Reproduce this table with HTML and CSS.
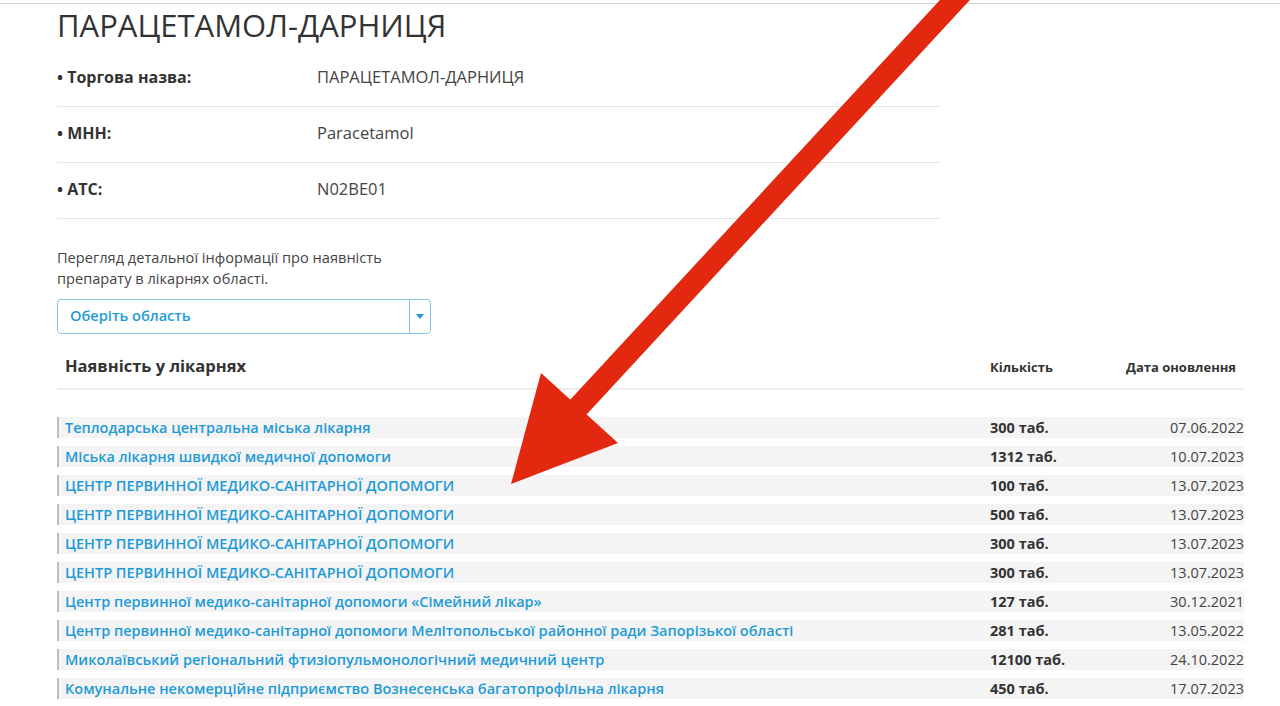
FILE: index.html
```html
<!DOCTYPE html>
<html lang="uk">
<head>
	<meta charset="utf-8">
	<title>ПАРАЦЕТАМОЛ-ДАРНИЦЯ</title>
	<link rel="stylesheet" href="styles.css">
</head>
<body>
	<div class="topLine"></div>
	<div class="page">
		<h1 class="drugTitle">ПАРАЦЕТАМОЛ-ДАРНИЦЯ</h1>

		<div class="infoTable">
			<div class="infoRow">
				<span class="infoLabel">• Торгова назва:</span>
				<span class="infoValue">ПАРАЦЕТАМОЛ-ДАРНИЦЯ</span>
			</div>
			<div class="infoRow">
				<span class="infoLabel">• МНН:</span>
				<span class="infoValue">Paracetamol</span>
			</div>
			<div class="infoRow">
				<span class="infoLabel">• АТС:</span>
				<span class="infoValue">N02BE01</span>
			</div>
		</div>

		<p class="regionHint">Перегляд детальної інформації про наявність препарату в лікарнях області.</p>

		<div class="regionSelect">
			<span class="regionSelectText">Оберіть область</span>
			<span class="regionSelectArrow">
				<svg viewBox="0 0 8 5" width="8" height="5"><polygon points="0 0 8 0 4 5" fill="#1e9bd7"/></svg>
			</span>
		</div>

		<div class="stockHead">
			<span class="colName stockTitle">Наявність у лікарнях</span>
			<span class="colQty">Кількість</span>
			<span class="colDate">Дата оновлення</span>
		</div>

		<div class="stockList">
			<div class="stockRow">
				<a class="colName" href="#">Теплодарська центральна міська лікарня</a>
				<span class="colQty">300 таб.</span>
				<span class="colDate">07.06.2022</span>
			</div>
			<div class="stockRow">
				<a class="colName" href="#">Міська лікарня швидкої медичної допомоги</a>
				<span class="colQty">1312 таб.</span>
				<span class="colDate">10.07.2023</span>
			</div>
			<div class="stockRow">
				<a class="colName" href="#">ЦЕНТР ПЕРВИННОЇ МЕДИКО-САНІТАРНОЇ ДОПОМОГИ</a>
				<span class="colQty">100 таб.</span>
				<span class="colDate">13.07.2023</span>
			</div>
			<div class="stockRow">
				<a class="colName" href="#">ЦЕНТР ПЕРВИННОЇ МЕДИКО-САНІТАРНОЇ ДОПОМОГИ</a>
				<span class="colQty">500 таб.</span>
				<span class="colDate">13.07.2023</span>
			</div>
			<div class="stockRow">
				<a class="colName" href="#">ЦЕНТР ПЕРВИННОЇ МЕДИКО-САНІТАРНОЇ ДОПОМОГИ</a>
				<span class="colQty">300 таб.</span>
				<span class="colDate">13.07.2023</span>
			</div>
			<div class="stockRow">
				<a class="colName" href="#">ЦЕНТР ПЕРВИННОЇ МЕДИКО-САНІТАРНОЇ ДОПОМОГИ</a>
				<span class="colQty">300 таб.</span>
				<span class="colDate">13.07.2023</span>
			</div>
			<div class="stockRow">
				<a class="colName" href="#">Центр первинної медико-санітарної допомоги «Сімейний лікар»</a>
				<span class="colQty">127 таб.</span>
				<span class="colDate">30.12.2021</span>
			</div>
			<div class="stockRow">
				<a class="colName" href="#">Центр первинної медико-санітарної допомоги Мелітопольської районної ради Запорізької області</a>
				<span class="colQty">281 таб.</span>
				<span class="colDate">13.05.2022</span>
			</div>
			<div class="stockRow">
				<a class="colName" href="#">Миколаївський регіональний фтизіопульмонологічний медичний центр</a>
				<span class="colQty">12100 таб.</span>
				<span class="colDate">24.10.2022</span>
			</div>
			<div class="stockRow">
				<a class="colName" href="#">Комунальне некомерційне підприємство Вознесенська багатопрофільна лікарня</a>
				<span class="colQty">450 таб.</span>
				<span class="colDate">17.07.2023</span>
			</div>
		</div>
	</div>

	<!-- red annotation arrow drawn over the page -->
	<svg class="annotation" viewBox="0 0 1280 706" width="1280" height="706">
		<line x1="966" y1="-12" x2="572" y2="414" stroke="#e2280e" stroke-width="22"/>
		<polygon points="511 484 541 373 618 443" fill="#e2280e"/>
	</svg>
</body>
</html>
```

FILE: styles.css
```css
body {
	margin: 0;
	padding: 0;
	overflow: hidden;
	background: #fff;
	font-family: "Open Sans", "Noto Sans", sans-serif;
	color: #333;
}

a {
	text-decoration: none;
}

.topLine {
	height: 3px;
	border-bottom: 1px solid #d4d4d4;
}

.page {
	width: 1187px;
	padding-left: 57px;
}

.drugTitle {
	margin: 1px 0 6px;
	font-size: 31px;
	font-weight: 400;
	line-height: 40px;
	color: #333;
}

/* drug info */
.infoTable {
	width: 883px;
}

.infoRow {
	display: flex;
	padding: 16px 0 19px;
	line-height: 20px;
	font-size: 16px;
	border-bottom: 1px solid #e6e6e6;
}

.infoLabel {
	width: 260px;
	font-weight: 700;
	color: #333;
}

.infoValue {
	font-size: 16.5px;
	color: #444;
}

.regionHint {
	width: 340px;
	margin: 28px 0 10px;
	font-size: 14.6px;
	line-height: 21px;
	color: #444;
}

.regionSelect {
	display: flex;
	width: 372px;
	height: 33px;
	border: 1px solid #86c6e4;
	border-radius: 4px;
}

.regionSelectText {
	flex: 1;
	padding-left: 12px;
	font-size: 14.6px;
	font-weight: 600;
	line-height: 31px;
	color: #1e9bd7;
}

.regionSelectArrow {
	display: flex;
	align-items: center;
	justify-content: center;
	width: 20px;
	border-left: 1px solid #86c6e4;
}

/* stock table */
.stockHead,
.stockRow {
	display: flex;
}

.stockHead {
	align-items: baseline;
	margin-top: 20px;
	padding: 0 8px 9px;
	border-bottom: 2px solid #ececec;
	font-size: 13px;
	font-weight: 700;
	line-height: 24px;
	white-space: nowrap;
}

.stockTitle {
	font-size: 16.5px;
}

.colName {
	flex: 1;
}

.colQty {
	width: 139px;
}

.colDate {
	width: 115px;
	text-align: right;
}

.stockHead .colQty {
	width: 136px;
}

.stockHead .colDate {
	width: 110px;
}

.stockList {
	margin-top: 27px;
}

.stockRow {
	height: 21px;
	margin-bottom: 8px;
	padding-left: 6px;
	border-left: 2px solid #bdbdbd;
	background: #f4f4f4;
	font-size: 14.5px;
	line-height: 21px;
}

.stockRow .colName {
	font-weight: 600;
	color: #1e9bd7;
	white-space: nowrap;
}

.stockRow .colQty {
	font-weight: 700;
	color: #333;
}

.stockRow .colDate {
	color: #444;
}

.annotation {
	position: absolute;
	top: 0;
	left: 0;
	pointer-events: none;
}
```
